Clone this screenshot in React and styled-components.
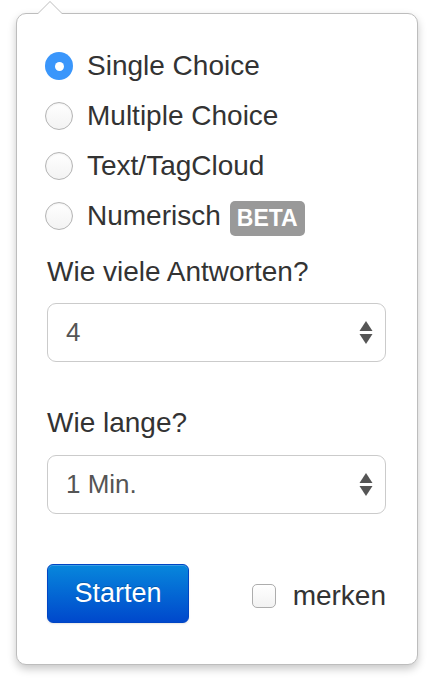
import React from "react";
import styled, { createGlobalStyle } from "styled-components";

const Global = createGlobalStyle`
  html, body { margin: 0; padding: 0; background: #ffffff; }
  body { font-family: "Liberation Sans", Arial, Helvetica, sans-serif; color: #333; }
  * { box-sizing: border-box; }
`;

const Page = styled.div`
  padding: 13px 0 0 16px;
  width: 434px;
  height: 691px;
`;

const Popover = styled.div`
  position: relative;
  width: 402px;
  height: 652px;
  background: #fff;
  border: 1px solid #bdbdbd;
  border-radius: 10px;
  box-shadow: 0 4px 9px rgba(0, 0, 0, 0.22);
  padding: 27px 31px 0 30px;
  display: flex;
  flex-direction: column;
`;

const Arrow = styled.div`
  position: absolute;
  left: 20px;
  top: -13px;
  width: 0;
  height: 0;
  border-left: 13px solid transparent;
  border-right: 13px solid transparent;
  border-bottom: 13px solid #bdbdbd;
  &::after {
    content: "";
    position: absolute;
    left: -12px;
    top: 1px;
    border-left: 12px solid transparent;
    border-right: 12px solid transparent;
    border-bottom: 12px solid #fff;
  }
`;

const RadioRow = styled.label`
  display: flex;
  align-items: center;
  height: 50px;
  margin-left: -2px;
  font-size: 28px;
  color: #333;
`;

const RadioDot = styled.span`
  width: 28px;
  height: 28px;
  border-radius: 50%;
  flex: none;
  margin-right: 14px;
  display: flex;
  align-items: center;
  justify-content: center;
  background: ${(p) => (p.$on ? "#3a96fb" : "linear-gradient(#ffffff, #f3f3f3)")};
  border: ${(p) => (p.$on ? "none" : "1px solid #b4b4b4")};
  box-shadow: ${(p) => (p.$on ? "none" : "inset 0 1px 2px rgba(0,0,0,0.06)")};
  &::after {
    content: "";
    display: ${(p) => (p.$on ? "block" : "none")};
    width: 9px;
    height: 9px;
    border-radius: 50%;
    background: #fff;
  }
`;

const Badge = styled.span`
  margin-left: 9px;
  background: #999;
  color: #fff;
  font-weight: bold;
  font-size: 23px;
  line-height: 35px;
  height: 35px;
  padding: 0 7px;
  border-radius: 5px;
  margin-top: 4px;
`;

const FieldLabel = styled.div`
  font-size: 28px;
  line-height: 34px;
  color: #333;
  margin-top: ${(p) => p.$top}px;
`;

const SelectBox = styled.div`
  margin-top: ${(p) => p.$top}px;
  height: 59px;
  border: 1.5px solid #cbcbcb;
  border-radius: 9px;
  display: flex;
  align-items: center;
  justify-content: space-between;
  padding: 0 12px 0 18px;
  font-size: 26px;
  color: #555;
`;

const Footer = styled.div`
  margin-top: 50px;
  display: flex;
  align-items: center;
  justify-content: space-between;
`;

const Button = styled.button`
  width: 142px;
  height: 59px;
  border: 1px solid #0045c4;
  border-radius: 6px;
  background: linear-gradient(#0787dc, #0048cc);
  color: #fff;
  font-family: inherit;
  font-size: 27px;
  text-shadow: 0 -1px 0 rgba(0, 0, 0, 0.2);
  box-shadow: inset 0 1px 0 rgba(255, 255, 255, 0.2), 0 1px 2px rgba(0, 0, 0, 0.1);
  padding: 0;
`;

const Remember = styled.label`
  display: flex;
  align-items: center;
  font-size: 28px;
  color: #333;
  margin-top: 4px;
`;

const Box = styled.span`
  width: 24px;
  height: 24px;
  border: 1px solid #adadad;
  border-radius: 5px;
  background: linear-gradient(#ffffff, #f2f2f2);
  margin-right: 17px;
`;

const Spinner = () => (
  <svg width="14" height="26" viewBox="0 0 14 26">
    <polygon points="7,1 13.5,11 0.5,11" fill="#555" />
    <polygon points="0.5,14 13.5,14 7,24" fill="#555" />
  </svg>
);

const types = [
  { label: "Single Choice", on: true },
  { label: "Multiple Choice" },
  { label: "Text/TagCloud" },
  { label: "Numerisch", beta: true },
];

export default function App() {
  return (
    <Page>
      <Global />
      <Popover>
        <Arrow />
        {types.map((t) => (
          <RadioRow key={t.label}>
            <RadioDot $on={t.on} />
            {t.label}
            {t.beta && <Badge>BETA</Badge>}
          </RadioRow>
        ))}
        <FieldLabel $top={14}>Wie viele Antworten?</FieldLabel>
        <SelectBox $top={14}>
          <span>4</span>
          <Spinner />
        </SelectBox>
        <FieldLabel $top={44}>Wie lange?</FieldLabel>
        <SelectBox $top={15}>
          <span>1 Min.</span>
          <Spinner />
        </SelectBox>
        <Footer>
          <Button>Starten</Button>
          <Remember>
            <Box />
            merken
          </Remember>
        </Footer>
      </Popover>
    </Page>
  );
}
